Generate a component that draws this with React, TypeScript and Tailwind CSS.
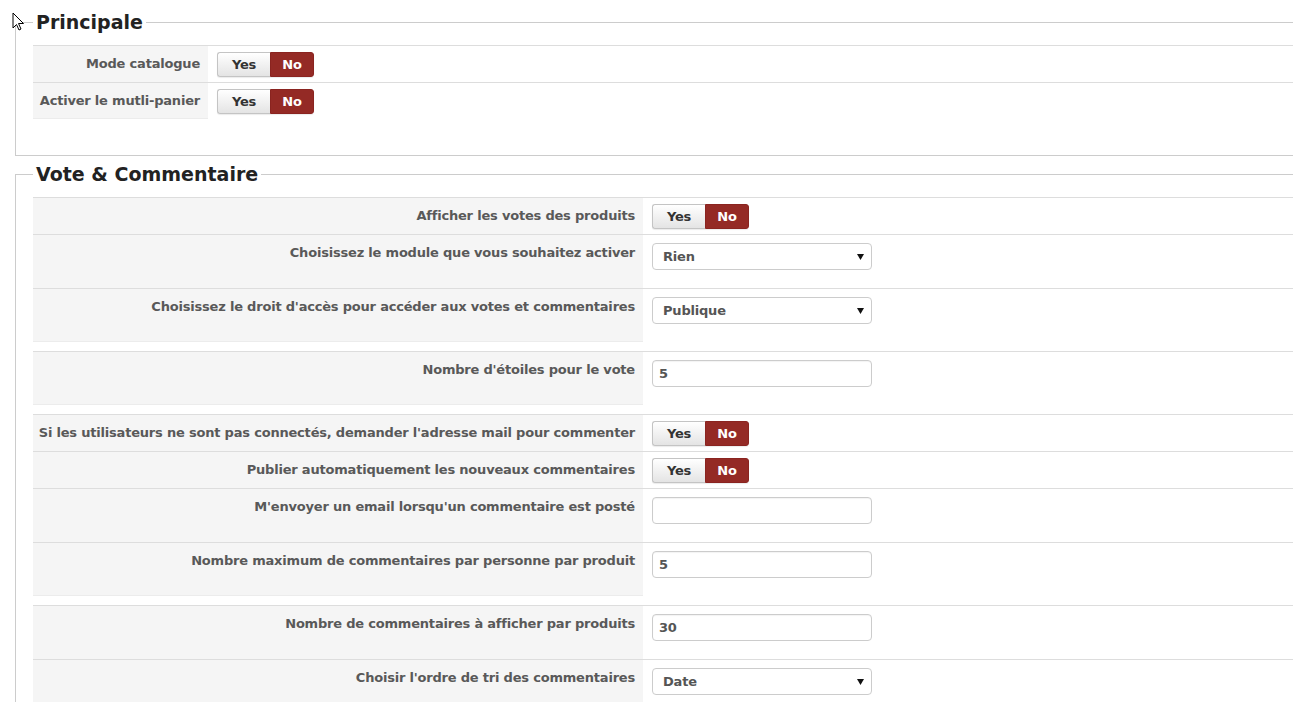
import React from "react";

type Control =
  | { kind: "toggle" }
  | { kind: "select"; value: string }
  | { kind: "input"; value: string };

type Row = { label: string; control: Control };

const principale: Row[] = [
  { label: "Mode catalogue", control: { kind: "toggle" } },
  { label: "Activer le mutli-panier", control: { kind: "toggle" } },
];

const vote: Row[][] = [
  [
    { label: "Afficher les votes des produits", control: { kind: "toggle" } },
    { label: "Choisissez le module que vous souhaitez activer", control: { kind: "select", value: "Rien" } },
    { label: "Choisissez le droit d'accès pour accéder aux votes et commentaires", control: { kind: "select", value: "Publique" } },
  ],
  [{ label: "Nombre d'étoiles pour le vote", control: { kind: "input", value: "5" } }],
  [
    { label: "Si les utilisateurs ne sont pas connectés, demander l'adresse mail pour commenter", control: { kind: "toggle" } },
    { label: "Publier automatiquement les nouveaux commentaires", control: { kind: "toggle" } },
    { label: "M'envoyer un email lorsqu'un commentaire est posté", control: { kind: "input", value: "" } },
    { label: "Nombre maximum de commentaires par personne par produit", control: { kind: "input", value: "5" } },
  ],
  [
    { label: "Nombre de commentaires à afficher par produits", control: { kind: "input", value: "30" } },
    { label: "Choisir l'ordre de tri des commentaires", control: { kind: "select", value: "Date" } },
  ],
];

function Toggle() {
  return (
    <div className="-mt-[2px] -mb-[3px] flex h-[25px] rounded-[3px] shadow-[0_1px_1px_rgba(0,0,0,0.08)]">
      <span className="flex w-[53px] items-center justify-center rounded-l-[3px] border border-r-0 border-[#c4c4c4] bg-gradient-to-b from-white to-[#e4e4e4] text-[#333]">
        Yes
      </span>
      <span className="flex w-[44px] items-center justify-center rounded-r-[3px] border border-[#8a2420] bg-[#942a25] text-white">
        No
      </span>
    </div>
  );
}

function Select({ value }: { value: string }) {
  return (
    <div className="mb-[10px] flex h-[27px] w-[220px] items-center justify-between rounded-[4px] border border-[#ccc] bg-white pl-[10px] pr-[7px] text-[#555]">
      <span>{value}</span>
      <svg width="7" height="7" viewBox="0 0 7 7">
        <polygon points="0,1 7,1 3.5,7" fill="#111" />
      </svg>
    </div>
  );
}

function Input({ value }: { value: string }) {
  return (
    <div className="mb-[10px] flex h-[27px] w-[220px] items-center rounded-[4px] border border-[#ccc] bg-white px-[6px] text-[#555] shadow-[inset_0_1px_1px_rgba(0,0,0,0.05)]">
      {value}
    </div>
  );
}

function FormRow({ row, labelWidth, last }: { row: Row; labelWidth: string; last: boolean }) {
  const c = row.control;
  return (
    <div className="flex border-t border-[#ddd]">
      <div
        className={`${labelWidth} shrink-0 whitespace-nowrap bg-[#f5f5f5] pr-[8px] pt-[8px] text-right text-[#595959] ${
          last ? "border-b border-[#ececec]" : ""
        }`}
      >
        {row.label}
      </div>
      <div className="flex items-start pl-[9px] pt-[8px] pb-[8px]">
        {c.kind === "toggle" && <Toggle />}
        {c.kind === "select" && <Select value={c.value} />}
        {c.kind === "input" && <Input value={c.value} />}
      </div>
    </div>
  );
}

function Group({ rows, labelWidth }: { rows: Row[]; labelWidth: string }) {
  return (
    <div>
      {rows.map((r, i) => (
        <FormRow key={r.label} row={r} labelWidth={labelWidth} last={i === rows.length - 1} />
      ))}
    </div>
  );
}

export default function App() {
  return (
    <div
      className="relative min-h-screen overflow-hidden bg-white pt-[10px] text-[13px] font-bold leading-[20px] tracking-[-0.2px]"
      style={{ fontFamily: '"DejaVu Sans", "Liberation Sans", sans-serif' }}
    >
      {/* Principale */}
      <fieldset className="ml-[15px] w-[1300px] border border-[#ccc] pl-[17px] pt-[11px] pb-[36px]">
        <legend className="px-[3px] text-[19px] leading-[24px] tracking-normal text-[#222]">Principale</legend>
        <Group rows={principale} labelWidth="w-[175px]" />
      </fieldset>

      {/* Vote & Commentaire */}
      <fieldset className="ml-[15px] mt-[6px] w-[1300px] border border-[#ccc] pl-[17px] pt-[11px] pb-[20px]">
        <legend className="px-[3px] text-[19px] leading-[24px] tracking-normal text-[#222]">Vote &amp; Commentaire</legend>
        <div className="flex flex-col gap-[9px]">
          {vote.map((g, i) => (
            <Group key={i} rows={g} labelWidth="w-[610px]" />
          ))}
        </div>
      </fieldset>

      {/* mouse pointer */}
      <svg className="absolute left-[12px] top-[12px]" width="14" height="20" viewBox="0 0 14 20">
        <path d="M1 1 L1 16 L4.5 12.5 L7 18 L9 17 L6.5 11.5 L11.5 11.5 Z" fill="#fff" stroke="#000" strokeWidth="1" strokeLinejoin="round" />
      </svg>
    </div>
  );
}
